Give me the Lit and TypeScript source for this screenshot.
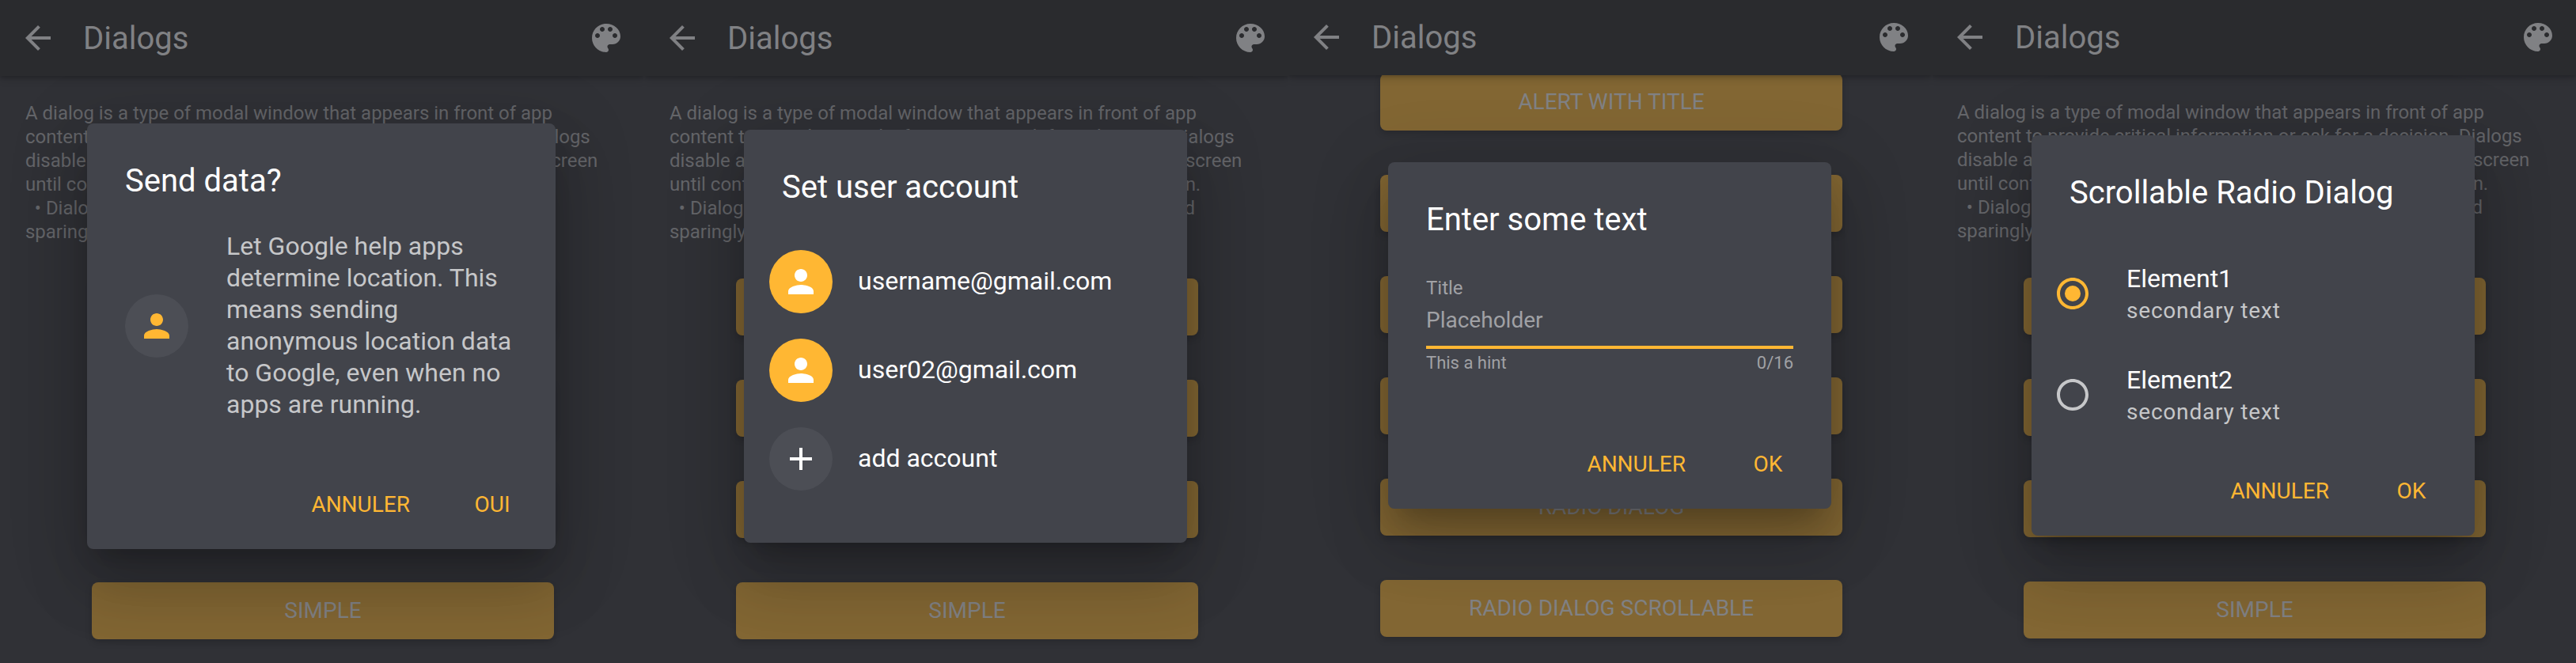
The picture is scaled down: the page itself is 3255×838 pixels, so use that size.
import { LitElement, html, css, svg, nothing } from "lit";
import { customElement, property } from "lit/decorators.js";

const ARROW = "M20 11H7.83l5.59-5.59L12 4l-8 8 8 8 1.41-1.41L7.83 13H20v-2z";
const PALETTE =
  "M12 3c-4.97 0-9 4.03-9 9s4.03 9 9 9c.83 0 1.5-.67 1.5-1.5 0-.39-.15-.74-.39-1.01-.23-.26-.38-.61-.38-.99 0-.83.67-1.5 1.5-1.5H16c2.76 0 5-2.24 5-5 0-4.42-4.03-8-9-8zm-5.5 9c-.83 0-1.5-.67-1.5-1.5S5.67 9 6.5 9 8 9.67 8 10.5 7.33 12 6.5 12zm3-4C8.67 8 8 7.33 8 6.5S8.67 5 9.5 5s1.5.67 1.5 1.5S10.33 8 9.5 8zm5 0c-.83 0-1.5-.67-1.5-1.5S13.67 5 14.5 5s1.5.67 1.5 1.5S15.33 8 14.5 8zm3 4c-.83 0-1.5-.67-1.5-1.5S16.67 9 17.5 9s1.5.67 1.5 1.5-.67 1.5-1.5 1.5z";
const PERSON =
  "M12 12c2.21 0 4-1.79 4-4s-1.79-4-4-4-4 1.79-4 4 1.79 4 4 4zm0 2c-2.67 0-8 1.34-8 4v2h16v-2c0-2.66-5.33-4-8-4z";
const PLUS = "M19 13h-6v6h-2v-6H5v-2h6V5h2v6h6v2z";
const RADIO_OFF =
  "M12 2C6.48 2 2 6.48 2 12s4.48 10 10 10 10-4.48 10-10S17.52 2 12 2zm0 18c-4.42 0-8-3.58-8-8s3.58-8 8-8 8 3.58 8 8-3.58 8-8 8z";

const icon = (d: string, dot = false) => html`
  <svg class="icon" viewBox="0 0 24 24" width="48" height="48">
    <path d=${d}></path>
    ${dot ? svg`<circle cx="12" cy="12" r="5"></circle>` : nothing}
  </svg>
`;

@customElement("phone-screen")
class PhoneScreen extends LitElement {
  @property({ type: Boolean }) scrolled = false;
  @property({ type: Boolean }) raised = false;
  @property({ type: Array }) labels: string[] = [];

  static styles = css`
    :host {
      display: block;
      position: relative;
      height: 838px;
      overflow: hidden;
      background: #303136;
    }
    .shell {
      display: flex;
      flex-direction: column;
      height: 838px;
    }
    .shell.raised {
      margin-top: -1px;
      height: 839px;
    }
    .bar {
      flex: none;
      display: flex;
      align-items: center;
      height: 96px;
      padding: 0 24px;
      background: #2a2b2e;
      color: #808184;
      z-index: 1;
      box-shadow: 0 2px 4px rgba(0, 0, 0, 0.14), 0 4px 10px rgba(0, 0, 0, 0.16);
    }
    .bar h1 {
      flex: 1;
      margin: 0 0 0 33px;
      padding-top: 2px;
      font-size: 40px;
      font-weight: 400;
      line-height: 48px;
    }
    .icon {
      display: block;
      fill: currentColor;
    }
    .page {
      padding-top: 32px;
    }
    .page.scrolled {
      margin-top: -34px;
    }
    .intro {
      margin: 0 0 44px;
      padding-left: 32px;
      font-size: 24px;
      line-height: 30px;
      letter-spacing: -0.02px;
      color: #646569;
      white-space: pre;
    }
    .list {
      display: flex;
      flex-direction: column;
      gap: 56px;
      padding-left: 116px;
    }
    .button {
      display: flex;
      align-items: center;
      justify-content: center;
      width: 584px;
      height: 72px;
      padding-bottom: 1px;
      box-sizing: border-box;
      border-radius: 8px;
      background: #826633;
      color: #808184;
      font-size: 28px;
      box-shadow: 0 4px 8px rgba(0, 0, 0, 0.16);
    }
    .overlay {
      position: absolute;
      left: 0;
      top: 0;
      display: flex;
      align-items: center;
      justify-content: center;
      width: 812px;
      height: 850px;
    }
    .overlay.raised {
      height: 848px;
    }
  `;

  render() {
    const raised = this.raised ? "raised" : "";
    return html`
      <div class="shell ${raised}">
        <header class="bar">
          ${icon(ARROW)}
          <h1>Dialogs</h1>
          ${icon(PALETTE)}
        </header>
        <main class="page ${this.scrolled ? "scrolled" : ""}">
          ${this.scrolled
            ? nothing
            : html`<p class="intro">${[
                "A dialog is a type of modal window that appears in front of app",
                "content to provide critical information or ask for a decision. Dialogs",
                "disable all app functionality when they appear, and remain on screen",
                "until confirmed, dismissed, or a required action has been taken.",
                "  • Dialogs are purposefully interruptive, so they should be used",
                "sparingly.",
              ].join("\n")}</p>`}
          <div class="list">
            ${this.labels.map((l) => html`<div class="button">${l}</div>`)}
          </div>
        </main>
      </div>
      <div class="overlay ${raised}"><slot></slot></div>
    `;
  }
}

@customElement("modal-card")
class ModalCard extends LitElement {
  @property() heading = "";
  @property({ type: Array }) actions: string[] = [];

  static styles = css`
    :host {
      display: flex;
      flex-direction: column;
      box-sizing: border-box;
      border-radius: 8px;
      background: #42444b;
      color: #fff;
      box-shadow: 0 22px 30px -14px rgba(0, 0, 0, 0.2),
        0 48px 76px 6px rgba(0, 0, 0, 0.14), 0 18px 92px 16px rgba(0, 0, 0, 0.12);
    }
    h2 {
      margin: 0;
      padding: 49px 48px 39px;
      font-size: 40px;
      font-weight: 400;
      line-height: 48px;
    }
    .body {
      flex: 1;
    }
    .actions {
      display: flex;
      justify-content: flex-end;
      gap: 16px;
      padding: 0 16px 21px;
    }
    .action {
      display: flex;
      align-items: center;
      justify-content: center;
      box-sizing: border-box;
      min-width: 128px;
      height: 72px;
      padding: 0 24px;
      color: #ffb733;
      font-size: 28px;
    }
  `;

  render() {
    return html`
      <h2>${this.heading}</h2>
      <div class="body"><slot></slot></div>
      ${this.actions.length
        ? html`<div class="actions">
            ${this.actions.map((a) => html`<div class="action">${a}</div>`)}
          </div>`
        : nothing}
    `;
  }
}

@customElement("app-root")
class AppRoot extends LitElement {
  static styles = css`
    :host {
      display: grid;
      grid-template-columns: 814px 814px 813px 814px;
      width: 3255px;
      height: 838px;
      overflow: hidden;
      background: #303136;
      font-family: Roboto, "Liberation Sans", sans-serif;
    }
    .icon {
      display: block;
      fill: currentColor;
    }
    .confirm {
      width: 592px;
      height: 538px;
    }
    .accounts {
      width: 560px;
      height: 522px;
    }
    .prompt {
      width: 560px;
      height: 438px;
    }
    .radios {
      width: 560px;
      height: 506px;
    }
    .message {
      display: flex;
      align-items: center;
      gap: 48px;
      padding-left: 48px;
      font-size: 32px;
      line-height: 40px;
      color: #c6c7c9;
    }
    .message p {
      margin: -1px 0 1px;
      white-space: pre;
    }
    .avatar {
      flex: none;
      display: flex;
      align-items: center;
      justify-content: center;
      width: 80px;
      height: 80px;
      border-radius: 50%;
      background: #4c4e55;
      color: #fff;
    }
    .avatar.tinted {
      color: #ffb733;
    }
    .avatar.solid {
      background: #ffb733;
    }
    .account {
      display: flex;
      align-items: center;
      gap: 32px;
      height: 112px;
      padding-left: 32px;
      font-size: 32px;
    }
    .account span {
      padding-bottom: 2px;
    }
    .field {
      padding: 9px 48px 0;
      color: #a0a1a5;
    }
    .label {
      font-size: 24px;
      line-height: 28px;
    }
    .value {
      padding-top: 7px;
      height: 52px;
      border-bottom: 4px solid #ffb733;
      font-size: 28px;
      line-height: 40px;
    }
    .notes {
      display: flex;
      justify-content: space-between;
      padding-top: 4px;
      font-size: 22px;
      line-height: 28px;
    }
    .option {
      display: flex;
      align-items: center;
      gap: 44px;
      height: 128px;
      padding-left: 28px;
      color: #c6c7c9;
    }
    .option .on {
      color: #ffb733;
    }
    .primary {
      padding-top: 2px;
      font-size: 32px;
      line-height: 40px;
      color: #fff;
    }
    .secondary {
      padding-top: 1px;
      font-size: 28px;
      line-height: 40px;
      letter-spacing: 0.8px;
    }
  `;

  render() {
    const buttons = ["ALERT", "ALERT WITH TITLE", "CONFIRM", "SIMPLE"];
    return html`
      <phone-screen .labels=${buttons}>
        <modal-card class="confirm" heading="Send data?" .actions=${["ANNULER", "OUI"]}>
          <div class="message">
            <div class="avatar tinted">${icon(PERSON)}</div>
            <p>${[
              "Let Google help apps",
              "determine location. This",
              "means sending",
              "anonymous location data",
              "to Google, even when no",
              "apps are running.",
            ].join("\n")}</p>
          </div>
        </modal-card>
      </phone-screen>

      <phone-screen .labels=${buttons}>
        <modal-card class="accounts" heading="Set user account">
          <div class="account">
            <div class="avatar solid">${icon(PERSON)}</div>
            <span>username@gmail.com</span>
          </div>
          <div class="account">
            <div class="avatar solid">${icon(PERSON)}</div>
            <span>user02@gmail.com</span>
          </div>
          <div class="account">
            <div class="avatar">${icon(PLUS)}</div>
            <span>add account</span>
          </div>
        </modal-card>
      </phone-screen>

      <phone-screen
        raised
        scrolled
        .labels=${["ALERT WITH TITLE", "CONFIRM", "SIMPLE", "PROMPT", "RADIO DIALOG", "RADIO DIALOG SCROLLABLE"]}
      >
        <modal-card class="prompt" heading="Enter some text" .actions=${["ANNULER", "OK"]}>
          <div class="field">
            <div class="label">Title</div>
            <div class="value">Placeholder</div>
            <div class="notes"><span>This a hint</span><span>0/16</span></div>
          </div>
        </modal-card>
      </phone-screen>

      <phone-screen raised .labels=${buttons}>
        <modal-card class="radios" heading="Scrollable Radio Dialog" .actions=${["ANNULER", "OK"]}>
          <div class="option">
            <div class="on">${icon(RADIO_OFF, true)}</div>
            <div>
              <div class="primary">Element1</div>
              <div class="secondary">secondary text</div>
            </div>
          </div>
          <div class="option">
            <div>${icon(RADIO_OFF)}</div>
            <div>
              <div class="primary">Element2</div>
              <div class="secondary">secondary text</div>
            </div>
          </div>
        </modal-card>
      </phone-screen>
    `;
  }
}
